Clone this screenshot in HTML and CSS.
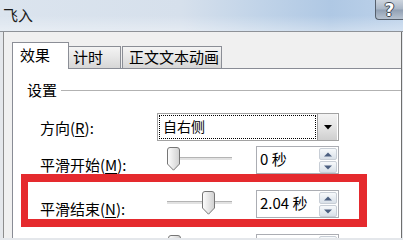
FILE: index.html
```html
<!DOCTYPE html>
<html lang="zh-CN">
<head>
<meta charset="utf-8">
<title>飞入</title>
<link rel="stylesheet" href="styles.css">
</head>
<body>
<div class="window">
  <div class="titlebar">
    <span class="title">飞入</span>
    <span class="help">?</span>
  </div>
  <div class="frame">
    <div class="tabs">
      <div class="tab active">效果</div>
      <div class="tab second">计时</div>
      <div class="tab third">正文文本动画</div>
    </div>
    <div class="panel">
      <div class="group-head"><span>设置</span><i class="rule"></i></div>

      <div class="row r1">
        <span class="lbl">方向(<u>R</u>):</span>
        <div class="combo">
          <div class="combo-value">自右侧</div>
          <div class="combo-btn">
            <svg width="8" height="5" viewBox="0 0 8 5"><path d="M0 0H8L4 4.5Z" fill="#000"/></svg>
          </div>
        </div>
      </div>

      <div class="row r2">
        <span class="lbl slbl">平滑开始(<u>M</u>):</span>
        <div class="slider-cell">
          <div class="slider">
            <div class="track"></div>
            <svg class="thumb" style="left:0px" width="13" height="24" viewBox="0 0 13 24">
              <defs><linearGradient id="tg1" x1="0" y1="0" x2="1" y2="0"><stop offset="0" stop-color="#fefefe"/><stop offset="1" stop-color="#d0d0d0"/></linearGradient></defs>
              <path d="M0.5 3Q0.5 0.5 3 0.5H10Q12.5 0.5 12.5 3V17L6.5 23.2L0.5 17Z" fill="url(#tg1)" stroke="#767676"/>
            </svg>
          </div>
        </div>
        <div class="spin">
          <span class="spin-val">0 秒</span>
          <div class="spin-btns">
            <div class="sb"><svg width="8" height="5" viewBox="0 0 8 5"><path d="M0 4.5H8L4 0.5Z" fill="#4c5f80"/></svg></div>
            <div class="sb"><svg width="8" height="5" viewBox="0 0 8 5"><path d="M0 0.5H8L4 4.5Z" fill="#4c5f80"/></svg></div>
          </div>
        </div>
      </div>

      <div class="row r3">
        <span class="lbl slbl">平滑结束(<u>N</u>):</span>
        <div class="slider-cell">
          <div class="slider">
            <div class="track"></div>
            <svg class="thumb" style="left:35px" width="13" height="24" viewBox="0 0 13 24">
              <defs><linearGradient id="tg2" x1="0" y1="0" x2="1" y2="0"><stop offset="0" stop-color="#fefefe"/><stop offset="1" stop-color="#d0d0d0"/></linearGradient></defs>
              <path d="M0.5 3Q0.5 0.5 3 0.5H10Q12.5 0.5 12.5 3V17L6.5 23.2L0.5 17Z" fill="url(#tg2)" stroke="#767676"/>
            </svg>
          </div>
        </div>
        <div class="spin">
          <span class="spin-val">2.04 秒</span>
          <div class="spin-btns">
            <div class="sb"><svg width="8" height="5" viewBox="0 0 8 5"><path d="M0 4.5H8L4 0.5Z" fill="#4c5f80"/></svg></div>
            <div class="sb"><svg width="8" height="5" viewBox="0 0 8 5"><path d="M0 0.5H8L4 4.5Z" fill="#4c5f80"/></svg></div>
          </div>
        </div>
      </div>

      <div class="row r4">
        <span class="lbl"></span>
        <div class="slider-cell">
          <div class="slider">
            <div class="track"></div>
            <svg class="thumb" style="left:1px" width="13" height="24" viewBox="0 0 13 24">
              <defs><linearGradient id="tg3" x1="0" y1="0" x2="1" y2="0"><stop offset="0" stop-color="#fefefe"/><stop offset="1" stop-color="#d0d0d0"/></linearGradient></defs>
              <path d="M0.5 3Q0.5 0.5 3 0.5H10Q12.5 0.5 12.5 3V17L6.5 23.2L0.5 17Z" fill="url(#tg3)" stroke="#767676"/>
            </svg>
          </div>
        </div>
        <div class="spin">
          <span class="spin-val"></span>
          <div class="spin-btns">
            <div class="sb"></div>
            <div class="sb"></div>
          </div>
        </div>
      </div>
    </div>
  </div>
  <div class="annot"></div>
</div>
</body>
</html>
```

FILE: styles.css
```css
* { box-sizing: border-box; }
html, body { margin: 0; padding: 0; }
body {
  width: 403px;
  height: 238px;
  overflow: hidden;
  background: #e4e7eb;
  font-family: "Noto Sans CJK SC", "Noto Sans", sans-serif;
  font-size: 15px;
  color: #000;
}
.window {
  position: relative;
  width: 403px;
  height: 238px;
  overflow: hidden;
  display: flex;
  flex-direction: column;
  background: #e4e7eb;
}

/* title bar */
.titlebar {
  flex: none;
  height: 32px;
  display: flex;
  justify-content: space-between;
  align-items: flex-start;
  border-bottom: 1px solid #8e9298;
  background:
    linear-gradient(180deg, rgba(255,255,255,0) 50%, rgba(255,255,255,0.35) 100%),
    linear-gradient(90deg, #dbe4ee 0%, #d6e0ec 45%, #c0d3e8 65%, #afc8e4 82%, #bdd2ea 100%);
}
.title {
  padding-left: 3px;
  line-height: 30px;
  font-size: 15px;
  color: #1c1c1c;
}
.help {
  width: 28px;
  height: 20px;
  border: 1px solid #56606d;
  border-top: none;
  border-right: none;
  border-radius: 0 0 0 4px;
  background: linear-gradient(180deg, #cdd5df 0%, #a9b6c6 48%, #909fb3 52%, #b7c3d1 100%);
  color: #fff;
  font-family: "DejaVu Sans", sans-serif;
  font-weight: bold;
  font-size: 17px;
  line-height: 20px;
  text-align: center;
  text-shadow: 1px 0 0 #3d4652, -1px 0 0 #3d4652, 0 1px 0 #3d4652, 0 -1px 0 #3d4652;
}

/* dialog body */
.frame {
  flex: 1;
  display: flex;
  flex-direction: column;
  margin-left: 3px;
  margin-right: 1px;
  background: #f0f0f0;
  border-left: 1px solid #8d8d8d;
  border-right: 1px solid #6e6e6e;
  min-height: 0;
}
.tabs {
  flex: none;
  display: flex;
  align-items: flex-end;
  height: 36px;
  padding: 10px 0 0 8px;
}
.tab {
  height: 22px;
  line-height: 20px;
  border: 1px solid #8b8e96;
  border-bottom: none;
  background: linear-gradient(180deg, #f4f4f4 0%, #e6e6e6 50%, #d6d6d6 100%);
  white-space: nowrap;
}
.tab.active {
  position: relative;
  z-index: 1;
  width: 57px;
  height: 27px;
  margin-bottom: -1px;
  line-height: 24px;
  padding-left: 7px;
  background: #fff;
}
.tab.second {
  width: 52px;
  padding-left: 4px;
  border-left: none;
}
.tab.third {
  width: 100px;
  margin-left: 1px;
  padding-left: 6px;
}

.panel {
  flex: 1;
  background: #fff;
  border-top: 1px solid #898c95;
  border-left: 1px solid #898c95;
  margin-left: 8px;
  padding-left: 14px;
}
.group-head {
  display: flex;
  align-items: center;
  height: 20px;
  margin-top: 11px;
  line-height: 20px;
}
.rule {
  flex: 1;
  height: 1px;
  margin-left: 4px;
  background: #b2b2b2;
}

.row {
  display: flex;
  align-items: flex-start;
  height: 28px;
  margin-left: 13px;
}
.r1 { margin-top: 13px; }
.r2 { margin-top: 5px; }
.r3 { margin-top: 16px; }
.r4 { margin-top: 16px; }

.lbl {
  flex: none;
  width: 117px;
  line-height: 28px;
  padding-top: 1px;
  white-space: nowrap;
}
.lbl u { text-underline-offset: 2px; }
.slbl { padding-top: 5px; }

/* combobox */
.combo {
  width: 182px;
  height: 28px;
  display: flex;
  border: 1px solid #a2a2a2;
  background: #fff;
}
.combo-value {
  flex: 1;
  margin: 1px;
  border: 1px dotted #000;
  padding-left: 3px;
  font-size: 14px;
  line-height: 20px;
}
.combo-btn {
  width: 20px;
  margin: 0 1px 0 0;
  display: flex;
  align-items: center;
  justify-content: center;
  border-left: 1px solid #9c9c9c;
  background: linear-gradient(180deg, #f3f3f3 0%, #e4e4e4 50%, #cfcfcf 100%);
}

/* slider */
.slider-cell {
  flex: none;
  width: 99px;
  padding-left: 10px;
}
.slider {
  position: relative;
  width: 65px;
  height: 28px;
}
.track {
  position: relative;
  top: 11px;
  height: 3px;
  border-top: 1px solid #b4b4b4;
  background: #e2e2e2;
}
.thumb {
  position: absolute;
  top: 1px;
}

/* spin box */
.spin {
  flex: none;
  width: 83px;
  height: 28px;
  display: flex;
  border: 1px solid #abadb3;
  background: #fff;
}
.spin-val {
  flex: 1;
  padding-left: 3px;
  line-height: 24px;
  white-space: nowrap;
}
.spin-btns {
  width: 19px;
  display: flex;
  flex-direction: column;
  gap: 1px;
  padding: 1px 1px 0 0;
}
.sb {
  height: 12px;
  display: flex;
  align-items: center;
  justify-content: center;
  border: 1px solid #c8ced6;
  border-radius: 2px;
  background: linear-gradient(180deg, #f7f9fb 0%, #e8edf2 50%, #d9e0e8 100%);
}

/* red annotation frame */
.annot {
  position: absolute;
  left: 21px;
  top: 174px;
  width: 346px;
  height: 53px;
  border-style: solid;
  border-color: #e52a2e;
  border-width: 8px 8px 8px 7px;
}
```
